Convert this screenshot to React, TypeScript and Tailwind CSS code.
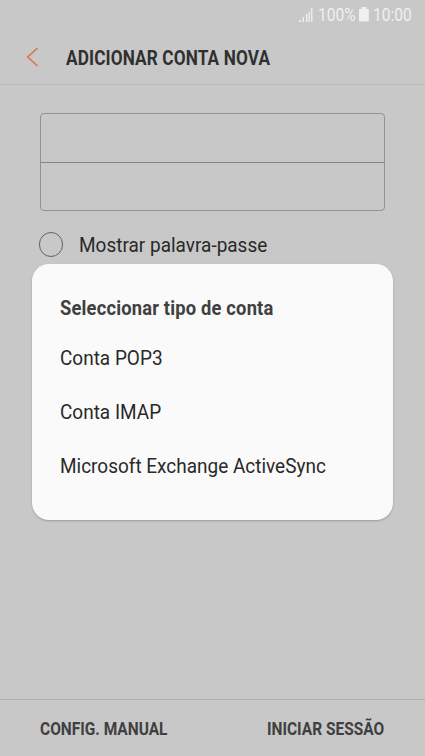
import React from "react";

const condensed = "origin-left whitespace-nowrap font-bold";

export default function App() {
  return (
    <div className="relative flex h-[756px] w-[425px] flex-col overflow-hidden bg-[#c8c8c8] font-['Roboto',sans-serif] text-[#292929]">
      <div className="flex h-[30px] items-center justify-end pr-[12px] text-[17.5px] leading-[30px] text-[#f0f0f0]">
        <svg width="15" height="15" viewBox="0 0 15 15" fill="currentColor" className="mr-[5px] opacity-90">
          <path d="M0 14l3-3v3zM4.500 9H6v5H4.500zM8 6h1.500v8H8zM10.400 3.500h1.500V14h-1.500zM13 0h1.500v14H13z" />
        </svg>
        <span className="w-[38px] whitespace-nowrap"><span className="inline-block origin-left scale-x-[0.89]">100%</span></span>
        <svg width="10" height="15" viewBox="0 0 10 15" fill="currentColor" className="-mt-px ml-[3px] mr-[4px]">
          <path d="M2.500 0h5v2H9a.8.8 0 01.8.8v11a.8.8 0 01-.8.800H.8a.8.8 0 01-.8-.8V2.800A.8.8 0 01.8 2h1.700z" />
        </svg>
        <span className="w-[40px] whitespace-nowrap"><span className="inline-block origin-left scale-x-[0.89]">10:00</span></span>
      </div>
      <header className="flex h-[55px] items-center border-b border-[#bcbcbc] pl-[26px]">
        <svg width="13" height="20" viewBox="0 0 13 20" fill="none" stroke="#d9784f" strokeWidth="1.7">
          <path d="M11.500 1L1.800 10l9.700 9" />
        </svg>
        <h1 className={`ml-[27px] mt-px text-[20px] tracking-[0.15px] scale-x-[0.86] text-[#303030] ${condensed}`}>ADICIONAR CONTA NOVA</h1>
      </header>
      <main className="flex-1 px-[40px] pt-[28px]">
        <div className="h-[98px] rounded-[4px] border border-[#929292]">
          <div className="h-[49px] border-b border-[#858585]" />
        </div>
        <div className="mt-[19px] flex h-[28px] items-center">
          <div className="-ml-[1px] h-[25px] w-[24px] rounded-full border border-[#626262]" />
          <span className="ml-[16px] origin-left scale-x-[0.974] pt-[3px] text-[19.5px]">Mostrar palavra-passe</span>
        </div>
      </main>
      <footer className="flex h-[57px] items-center justify-between border-t border-[#b0b0b0] px-[40px] text-[18px] text-[#404040]">
        <span className={`w-[128px] scale-x-[0.86] ${condensed}`}>CONFIG. MANUAL</span>
        <span className={`w-[118px] scale-x-[0.86] ${condensed}`}>INICIAR SESSÃO</span>
      </footer>
      <section className="absolute left-[32px] top-[264px] h-[256px] w-[361px] rounded-[17px] bg-[#fafafa] px-[28px] pt-[30px] shadow-[0_1px_2px_#999]">
        <h2 className={`text-[20.5px] leading-[28px] tracking-[0.2px] scale-x-[0.895] text-[#404040] ${condensed}`}>Seleccionar tipo de conta</h2>
        <ul className="mt-[10px] origin-left scale-x-[0.973] text-[19.5px] leading-[54px]">
          <li>Conta POP3</li>
          <li>Conta IMAP</li>
          <li>Microsoft Exchange ActiveSync</li>
        </ul>
      </section>
    </div>
  );
}
